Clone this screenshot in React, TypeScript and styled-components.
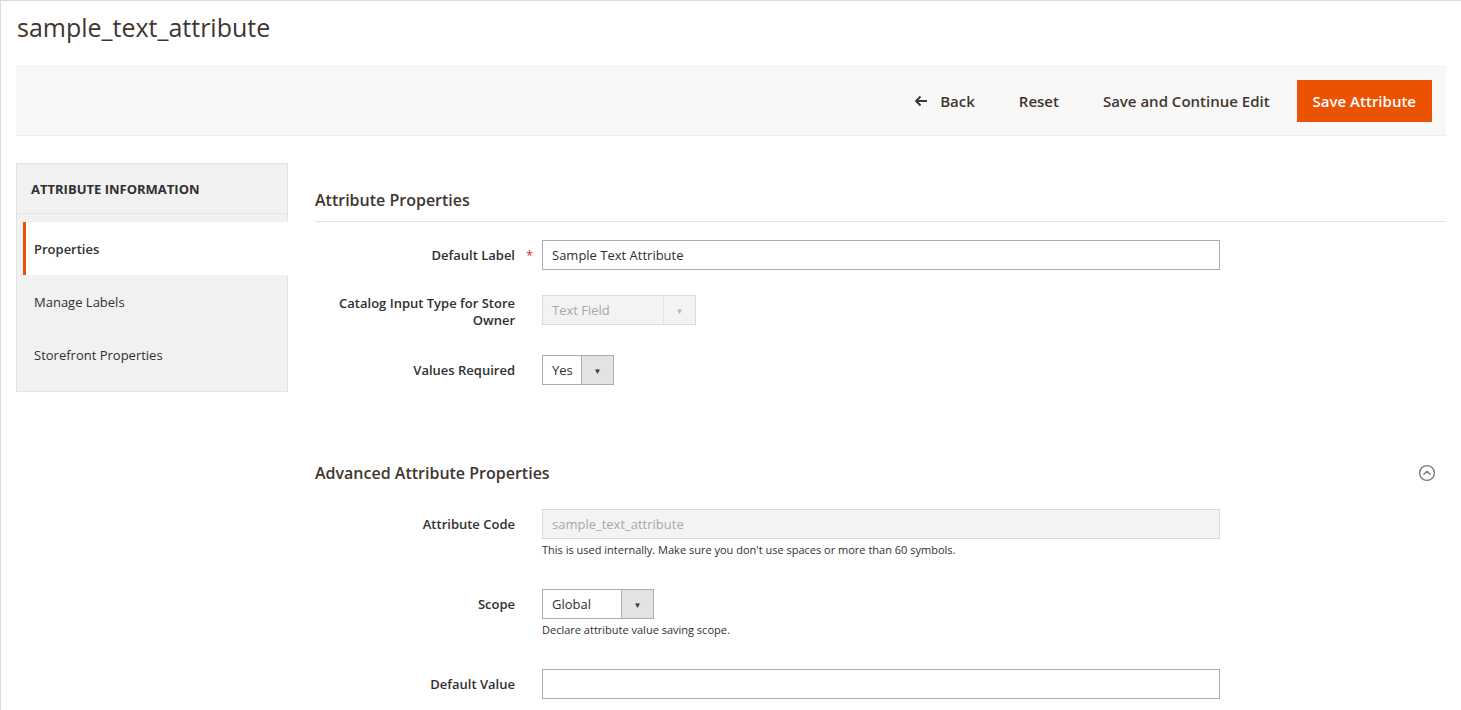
import React from 'react';
import styled, { createGlobalStyle } from 'styled-components';

const GlobalStyle = createGlobalStyle`
  html, body {
    margin: 0;
    padding: 0;
    background: #fff;
  }
  body {
    font-family: "Open Sans", "Liberation Sans", sans-serif;
    color: #303030;
  }
`;

const Page = styled.div`
  min-height: 709px;
  border-top: 1px solid #dcdcdc;
  border-left: 1px solid #dcdcdc;
  padding: 0 15px 0 15px;
  box-sizing: border-box;
`;

const Title = styled.h1`
  margin: 0;
  padding: 10px 0 0 1px;
  height: 65px;
  box-sizing: border-box;
  font-size: 25px;
  font-weight: 400;
  color: #41362f;
  line-height: 32px;
`;

const Toolbar = styled.div`
  display: flex;
  justify-content: flex-end;
  align-items: center;
  height: 70px;
  box-sizing: border-box;
  background: #f8f8f8;
  border-top: 1px solid #efefef;
  border-bottom: 1px solid #efefef;
  padding-right: 14px;
`;

const ActionButton = styled.button<{ $primary?: boolean }>`
  display: flex;
  align-items: center;
  gap: 12px;
  height: 42px;
  padding: 0 16px;
  margin-left: ${(p) => (p.$primary ? '11px' : '12px')};
  border: none;
  background: ${(p) => (p.$primary ? '#eb5202' : 'transparent')};
  color: ${(p) => (p.$primary ? '#fff' : '#41362f')};
  font-family: inherit;
  font-size: 15px;
  font-weight: 600;
  cursor: pointer;
`;

const Body = styled.div`
  display: flex;
  gap: 27px;
  padding-top: 27px;
`;

const Sidebar = styled.nav`
  flex: 0 0 272px;
  align-self: flex-start;
  background: #f1f1f1;
  border: 1px solid #e3e3e3;
  box-sizing: border-box;
  padding-bottom: 10px;
`;

const SideTitle = styled.div`
  height: 49px;
  display: flex;
  align-items: center;
  padding-left: 14px;
  font-size: 13px;
  font-weight: 700;
  color: #303030;
  border-bottom: 1px solid #e3e3e3;
  margin-bottom: 8px;
`;

const NavItem = styled.a<{ $active?: boolean }>`
  display: flex;
  align-items: center;
  height: 53px;
  margin-left: 6px;
  margin-right: -1px;
  padding-left: 8px;
  border-left: 3px solid ${(p) => (p.$active ? '#eb5202' : 'transparent')};
  background: ${(p) => (p.$active ? '#fff' : 'transparent')};
  font-size: 13px;
  font-weight: ${(p) => (p.$active ? 600 : 400)};
  color: #303030;
  text-decoration: none;
`;

const Main = styled.main`
  flex: 1;
  padding-top: 25px;
`;

const SectionHead = styled.div<{ $lined?: boolean }>`
  display: flex;
  justify-content: space-between;
  align-items: center;
  padding-bottom: ${(p) => (p.$lined ? '9px' : '11px')};
  padding-right: ${(p) => (p.$lined ? '0' : '10px')};
  border-bottom: ${(p) => (p.$lined ? '1px solid #e3e3e3' : 'none')};
  margin-bottom: ${(p) => (p.$lined ? '18px' : '13px')};
`;

const SectionTitle = styled.h2`
  margin: 0;
  font-size: 16px;
  font-weight: 600;
  color: #41362f;
  line-height: 24px;
`;

const Row = styled.div<{ $gap?: number }>`
  display: grid;
  grid-template-columns: 200px 27px 678px;
  align-items: start;
  margin-bottom: ${(p) => p.$gap ?? 25}px;
`;

const Label = styled.label`
  text-align: right;
  font-size: 13px;
  font-weight: 600;
  color: #303030;
  line-height: 17px;
  min-height: 30px;
  display: flex;
  align-items: center;
  justify-content: flex-end;
`;

const Required = styled.span`
  color: #e22626;
  font-size: 13px;
  text-align: center;
  line-height: 30px;
  padding-left: 2px;
`;

const Control = styled.div`
  display: flex;
  flex-direction: column;
  align-items: flex-start;
`;

const TextInput = styled.input<{ $disabled?: boolean }>`
  width: 678px;
  height: 30px;
  box-sizing: border-box;
  border: 1px solid ${(p) => (p.$disabled ? '#dadada' : '#adadad')};
  background: ${(p) => (p.$disabled ? '#f3f3f3' : '#fff')};
  color: ${(p) => (p.$disabled ? '#a8a8a8' : '#303030')};
  padding: 0 9px;
  font-family: inherit;
  font-size: 13px;
  outline: none;
`;

const Select = styled.div<{ $width: number; $disabled?: boolean }>`
  display: flex;
  width: ${(p) => p.$width}px;
  height: 30px;
  box-sizing: border-box;
  border: 1px solid ${(p) => (p.$disabled ? '#dadada' : '#adadad')};
  background: ${(p) => (p.$disabled ? '#f3f3f3' : '#fff')};
`;

const SelectValue = styled.span<{ $disabled?: boolean }>`
  flex: 1;
  display: flex;
  align-items: center;
  padding-left: 9px;
  font-size: 13px;
  color: ${(p) => (p.$disabled ? '#a8a8a8' : '#303030')};
`;

const SelectArrow = styled.span<{ $disabled?: boolean }>`
  flex: 0 0 31px;
  display: flex;
  align-items: center;
  justify-content: center;
  background: ${(p) => (p.$disabled ? '#f3f3f3' : '#e3e3e3')};
  border-left: 1px solid ${(p) => (p.$disabled ? '#e3e3e3' : '#adadad')};
  color: ${(p) => (p.$disabled ? '#b5b5b5' : '#41362f')};
  font-size: 8px;
`;

const Note = styled.div`
  margin-top: 4px;
  font-size: 11px;
  color: #303030;
  line-height: 14px;
`;

const Spacer = styled.div`
  height: 51px;
`;

const CollapseIcon = () => (
  <svg width="18" height="18" viewBox="0 0 18 18" fill="none" stroke="#7a7a7a" strokeWidth="1.4">
    <circle cx="9" cy="9" r="7.4" />
    <path d="M5.9 10.3 L9 7.3 L12.1 10.3" strokeLinecap="round" strokeLinejoin="round" />
  </svg>
);

const BackArrow = () => (
  <svg width="14" height="12" viewBox="0 0 14 12" fill="none" stroke="#41362f" strokeWidth="1.8">
    <path d="M13 6 H2 M6.5 1.5 L2 6 L6.5 10.5" strokeLinejoin="round" />
  </svg>
);

const App: React.FC = () => {
  return (
    <>
      <GlobalStyle />
      <Page>
        <Title>sample_text_attribute</Title>
        <Toolbar>
          <ActionButton>
            <BackArrow />
            Back
          </ActionButton>
          <ActionButton>Reset</ActionButton>
          <ActionButton>Save and Continue Edit</ActionButton>
          <ActionButton $primary>Save Attribute</ActionButton>
        </Toolbar>
        <Body>
          <Sidebar>
            <SideTitle>ATTRIBUTE INFORMATION</SideTitle>
            <NavItem $active>Properties</NavItem>
            <NavItem>Manage Labels</NavItem>
            <NavItem>Storefront Properties</NavItem>
          </Sidebar>
          <Main>
            <SectionHead $lined>
              <SectionTitle>Attribute Properties</SectionTitle>
            </SectionHead>
            <Row>
              <Label>Default Label</Label>
              <Required>*</Required>
              <Control>
                <TextInput defaultValue="Sample Text Attribute" />
              </Control>
            </Row>
            <Row $gap={26}>
              <Label>
                Catalog Input Type for Store
                <br />
                Owner
              </Label>
              <span />
              <Control>
                <Select $width={154} $disabled>
                  <SelectValue $disabled>Text Field</SelectValue>
                  <SelectArrow $disabled>▼</SelectArrow>
                </Select>
              </Control>
            </Row>
            <Row>
              <Label>Values Required</Label>
              <span />
              <Control>
                <Select $width={72}>
                  <SelectValue>Yes</SelectValue>
                  <SelectArrow>▼</SelectArrow>
                </Select>
              </Control>
            </Row>
            <Spacer />
            <SectionHead>
              <SectionTitle>Advanced Attribute Properties</SectionTitle>
              <CollapseIcon />
            </SectionHead>
            <Row $gap={32}>
              <Label>Attribute Code</Label>
              <span />
              <Control>
                <TextInput $disabled readOnly defaultValue="sample_text_attribute" />
                <Note>This is used internally. Make sure you don't use spaces or more than 60 symbols.</Note>
              </Control>
            </Row>
            <Row $gap={32}>
              <Label>Scope</Label>
              <span />
              <Control>
                <Select $width={112}>
                  <SelectValue>Global</SelectValue>
                  <SelectArrow>▼</SelectArrow>
                </Select>
                <Note>Declare attribute value saving scope.</Note>
              </Control>
            </Row>
            <Row>
              <Label>Default Value</Label>
              <span />
              <Control>
                <TextInput />
              </Control>
            </Row>
          </Main>
        </Body>
      </Page>
    </>
  );
};

export default App;
